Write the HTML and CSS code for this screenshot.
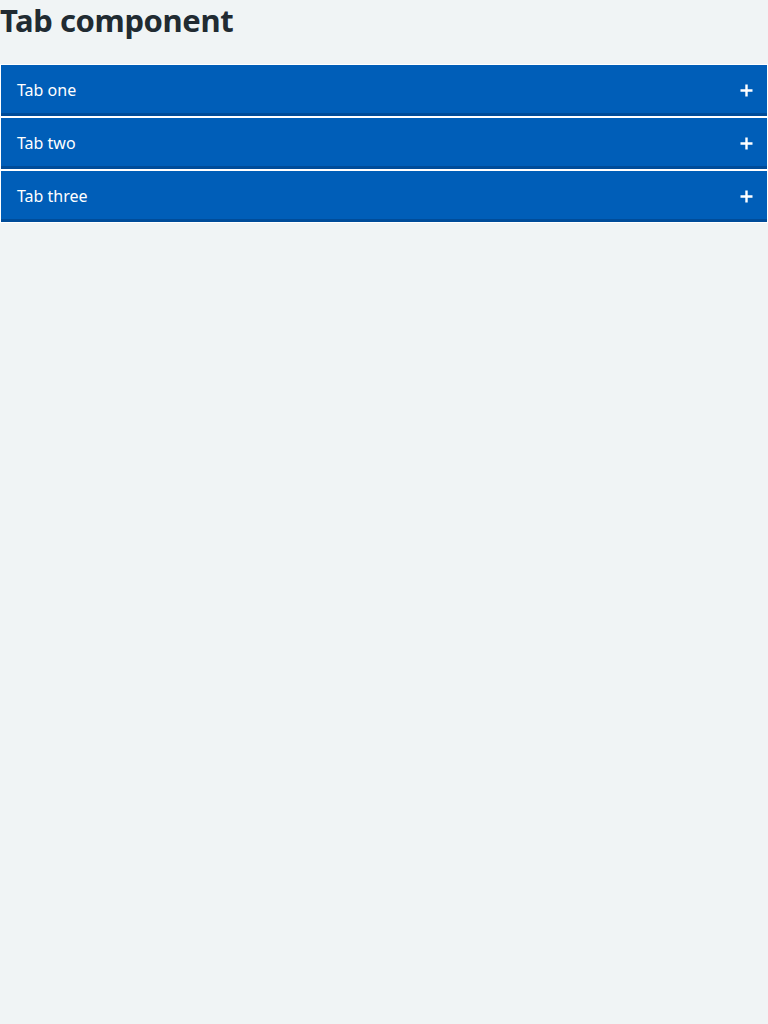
FILE: index.html
```html
<!DOCTYPE html>
<html lang="en">
<head>
<meta charset="utf-8">
<title>Tab component</title>
<link rel="stylesheet" href="styles.css">
</head>
<body>
<h1 class="title">Tab component</h1>
<div class="tabs">
  <button class="tab" type="button"><span class="tab-label">Tab one</span><svg class="plus" width="13" height="13" viewBox="0 0 13 13"><path d="M6.5 0.5v12M0.5 6.5h12" stroke="#fff" stroke-width="2.4"/></svg></button>
  <button class="tab" type="button"><span class="tab-label">Tab two</span><svg class="plus" width="13" height="13" viewBox="0 0 13 13"><path d="M6.5 0.5v12M0.5 6.5h12" stroke="#fff" stroke-width="2.4"/></svg></button>
  <button class="tab" type="button"><span class="tab-label">Tab three</span><svg class="plus" width="13" height="13" viewBox="0 0 13 13"><path d="M6.5 0.5v12M0.5 6.5h12" stroke="#fff" stroke-width="2.4"/></svg></button>
</div>
</body>
</html>
```
FILE: styles.css
```css
html, body {
  margin: 0;
  padding: 0;
  background: #f0f4f5;
}
body {
  font-family: "Noto Sans", "Open Sans", sans-serif;
  color: #212b32;
}
.title {
  margin: 0;
  font-size: 31px;
  font-weight: 700;
  line-height: 40px;
  letter-spacing: -0.4px;
}
.tabs {
  display: flex;
  flex-direction: column;
  margin-top: 24px;
  overflow: hidden;
}
.tab {
  display: flex;
  align-items: center;
  justify-content: space-between;
  box-sizing: border-box;
  width: 100%;
  height: 53px;
  margin: 0;
  padding: 0 14px 1px 16px;
  background: #005eb8;
  border: 1px solid #ffffff;
  box-shadow: inset 0 -3px 0 #004c99;
  color: #ffffff;
  font-family: "Noto Sans", "Open Sans", sans-serif;
  font-size: 16px;
  line-height: 24px;
  text-align: left;
  cursor: pointer;
}
.plus {
  display: block;
}
```
